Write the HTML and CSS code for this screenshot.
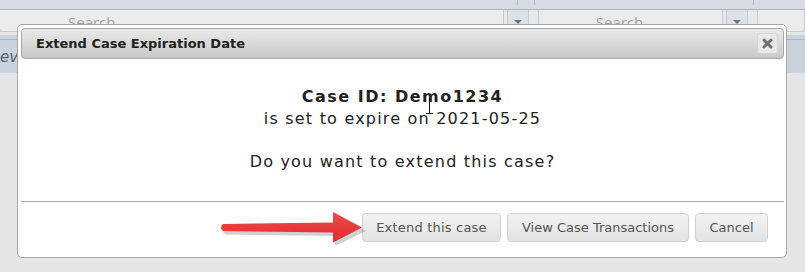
FILE: index.html
```html
<!DOCTYPE html>
<html lang="en">
<head>
  <meta charset="UTF-8">
  <title>Extend Case Expiration Date</title>
  <link rel="stylesheet" href="styles.css">
</head>
<body>

  <div class="grid">
    <div class="grid-head">
      <span class="sep sep-a"></span>
      <span class="sep sep-b"></span>
      <span class="sep sep-c"></span>
    </div>
    <div class="grid-filter">
      <div class="search search-wide"><span>Search</span></div>
      <div class="drop"><i></i></div>
      <div class="search search-mid"><span>Search</span></div>
      <div class="drop"><i></i></div>
      <div class="search search-end"></div>
    </div>
    <div class="grid-row">
      <span class="cell-text">eve</span>
    </div>
  </div>

  <div class="dialog">
    <div class="dialog-title">
      <span>Extend Case Expiration Date</span>
      <button class="close" title="Close">
        <svg width="11" height="11" viewBox="0 0 11 11">
          <path d="M2 2 L9 9 M9 2 L2 9" stroke="#707070" stroke-width="3" stroke-linecap="round"/>
        </svg>
      </button>
    </div>
    <div class="dialog-body">
      <strong>Case ID: Demo1234</strong><br>
      is set to expire on 2021-05-25<br><br>
      Do you want to extend this case?
    </div>
    <div class="dialog-buttons">
      <button class="btn btn-extend">Extend this case</button>
      <button class="btn btn-view">View Case Transactions</button>
      <button class="btn btn-cancel">Cancel</button>
    </div>
  </div>

  <!-- annotation arrow pasted over the screenshot -->
  <svg class="arrow" width="150" height="42" viewBox="0 0 150 42">
    <defs>
      <linearGradient id="red" x1="0" y1="0" x2="0" y2="1">
        <stop offset="0" stop-color="#f0494b"/>
        <stop offset="1" stop-color="#e02c30"/>
      </linearGradient>
    </defs>
    <g transform="translate(2,3)" fill="#000" opacity="0.18">
      <path d="M4 15.5 L114 14 L114 4 L145 19 L114 34 L114 24 L4 22.5 Q0 19 4 15.5 Z"/>
    </g>
    <path d="M4 15 L114 13.5 L114 3 L143 18.5 L114 33.5 L114 23.5 L4 22 Q0 18.5 4 15 Z" fill="url(#red)"/>
  </svg>

  <svg class="cursor" width="9" height="18" viewBox="0 0 9 18">
    <path d="M4.5 1 V16.5 M1 16.5 H8" stroke="#111" stroke-width="1"/>
  </svg>

</body>
</html>
```

FILE: styles.css
```css
body {
  margin: 0;
  height: 272px;
  overflow: hidden;
  background-color: #e6e6e6;
  font-family: "DejaVu Sans", Verdana, sans-serif;
  position: relative;
}

.grid-head {
  height: 9px;
  background-color: #d6dce4;
  border-bottom: 1px solid #a9b2bd;
  position: relative;
}

.sep {
  position: absolute;
  top: 0;
  width: 1px;
  height: 5px;
  background-color: #b4bcc6;
}
.sep-a { left: 517px; }
.sep-b { left: 534px; }
.sep-c { left: 753px; }

.grid-filter {
  display: flex;
  height: 24px;
  background-color: #e8e8e8;
}

.search {
  height: 22px;
  border: 1px solid #c3cad3;
  border-top: none;
  border-radius: 0 0 3px 3px;
  background-color: #ececec;
  text-align: center;
  font-family: "Open Sans", sans-serif;
  font-size: 15px;
  line-height: 20px;
  padding-top: 2px;
  box-sizing: border-box;
  color: #9aa3ad;
}
.search-wide {
  width: 505px;
  margin-left: -1px;
  text-align: left;
}
.search-wide span { margin-left: 68px; }
.search-mid {
  width: 185px;
  margin-left: 9px;
}
.search-mid span { margin-left: -22px; }
.search-end {
  flex: 1;
  margin-left: 9px;
}

.drop {
  width: 20px;
  height: 22px;
  margin-left: 3px;
  border: 1px solid #c3cad3;
  border-top: none;
  border-radius: 0 0 3px 3px;
  background-color: #dde2e8;
  position: relative;
}
.drop i {
  position: absolute;
  left: 6px;
  top: 10px;
  border-left: 4px solid transparent;
  border-right: 4px solid transparent;
  border-top: 4px solid #6b747e;
}

.grid-row {
  height: 38px;
  background-color: #c9d2dd;
  border-top: 1px solid #dfe5ec;
  box-shadow: inset 0 4px 0 #c9d2dd, inset 0 5px 0 #aab8c8;
}

.cell-text {
  display: inline-block;
  margin-top: 13px;
  font-style: italic;
  font-size: 15px;
  color: #4f5e72;
}

/* dialog overlay */
.dialog {
  position: absolute;
  left: 17px;
  top: 24px;
  width: 763px;
  height: 226px;
  padding: 3px 2px 3px 3px;
  background-color: #fff;
  border: 1px solid #a6a6a6;
  border-radius: 5px;
  display: flex;
  flex-direction: column;
}

.dialog-title {
  height: 29px;
  border: 1px solid #a8a8a8;
  border-radius: 4px;
  background: linear-gradient(#e9e9e9, #c9c9c9);
  display: flex;
  align-items: center;
  justify-content: space-between;
  padding: 0 5px 0 14px;
  font-size: 13px;
  font-weight: bold;
  color: #222;
}

.close {
  width: 21px;
  height: 21px;
  padding: 0;
  border: 1px solid #d6d6d6;
  border-radius: 3px;
  background-color: #e8e8e8;
  display: flex;
  align-items: center;
  justify-content: center;
}

.dialog-body {
  height: 115px;
  padding-top: 27px;
  text-align: center;
  font-size: 16px;
  letter-spacing: 1.2px;
  line-height: 21.5px;
  color: #222;
  border-bottom: 1px solid #a8a8a8;
}

.dialog-body strong {
  letter-spacing: 1.5px;
}

.dialog-buttons {
  display: flex;
  justify-content: flex-end;
  gap: 6px;
  padding: 11px 16px 0 0;
}

.btn {
  height: 29px;
  padding: 0;
  border: 1px solid #d0d0d0;
  border-radius: 4px;
  background: linear-gradient(#f3f3f3, #e3e3e3);
  font-family: "DejaVu Sans", Verdana, sans-serif;
  font-size: 13px;
  color: #555;
}
.btn-extend { width: 139px; letter-spacing: 0.2px; }
.btn-view { width: 182px; }
.btn-cancel { width: 73px; }

.arrow {
  position: absolute;
  left: 219px;
  top: 209px;
}

.cursor {
  position: absolute;
  left: 425px;
  top: 97px;
}
```
